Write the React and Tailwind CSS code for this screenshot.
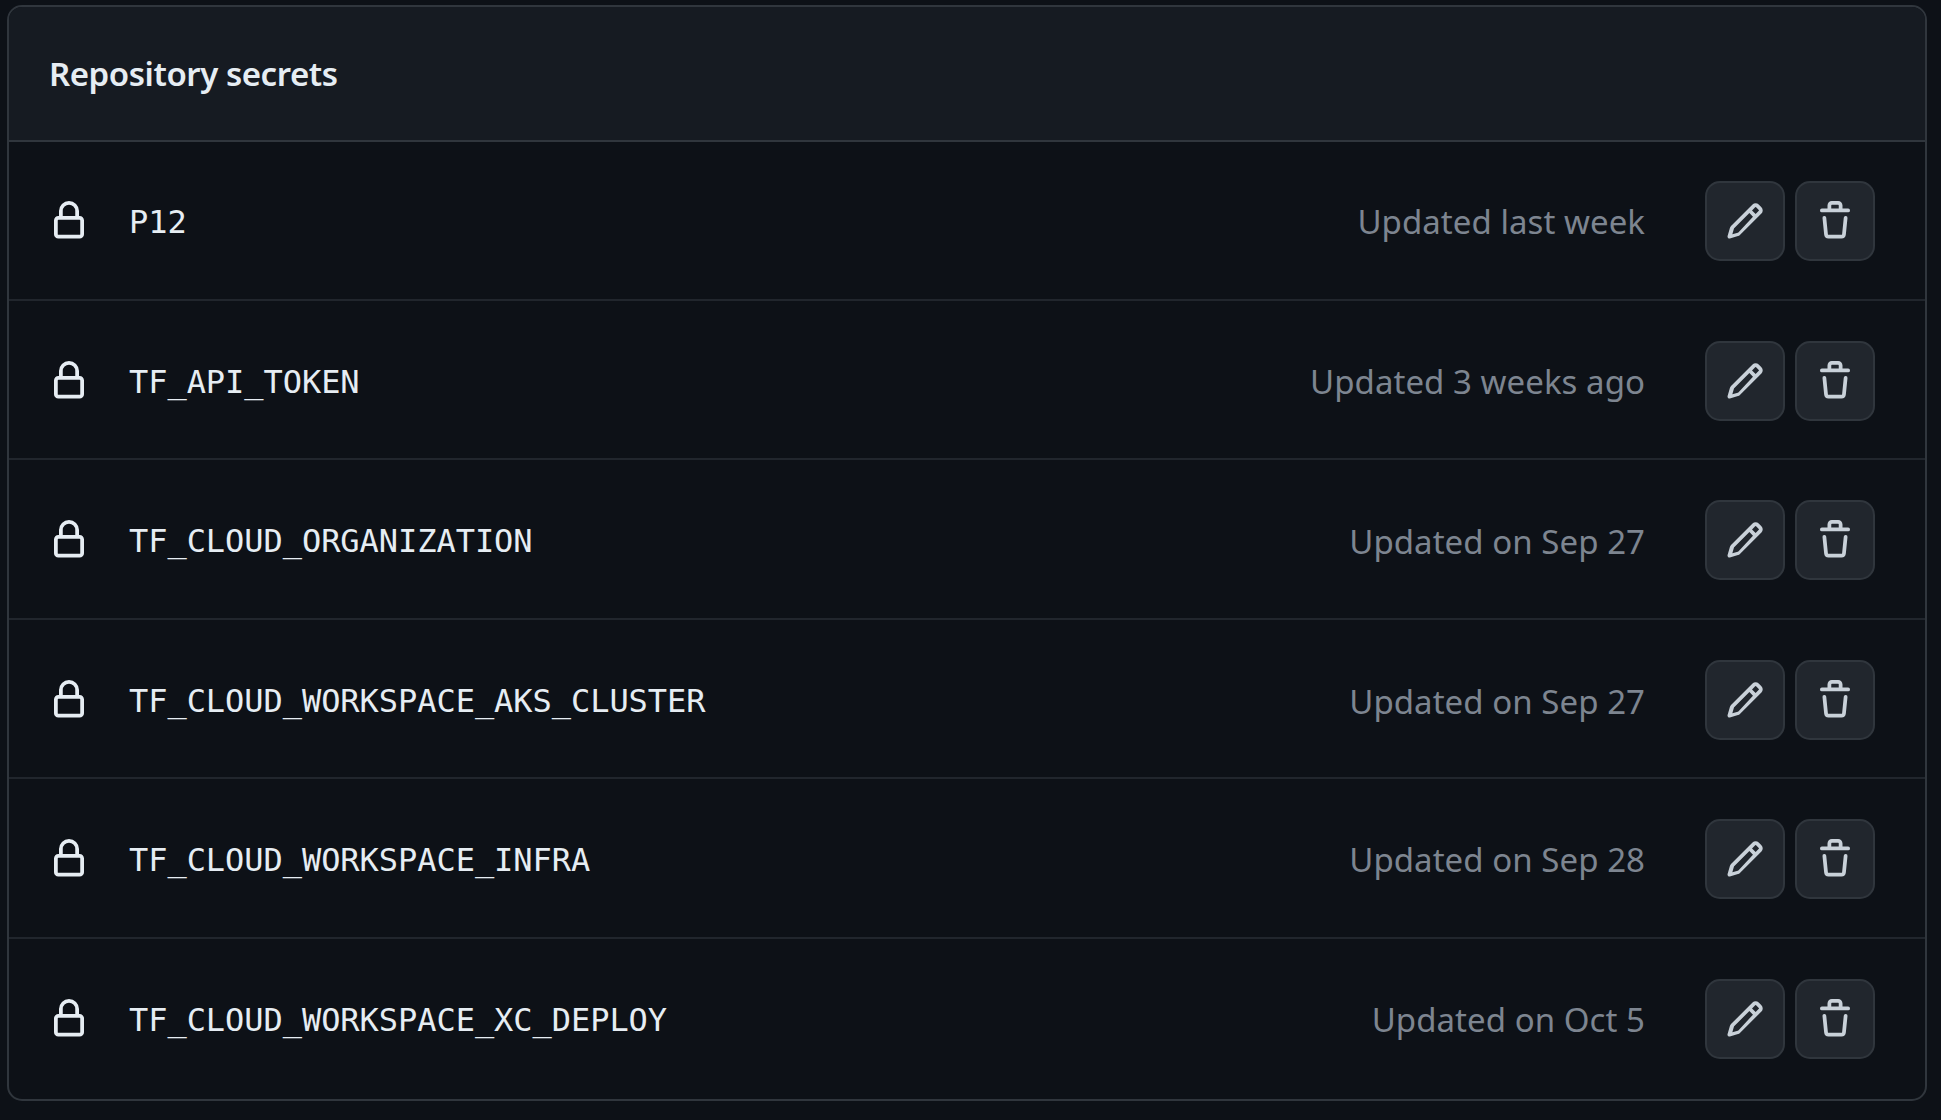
const secrets = [
  ["P12", "Updated last week"],
  ["TF_API_TOKEN", "Updated 3 weeks ago"],
  ["TF_CLOUD_ORGANIZATION", "Updated on Sep 27"],
  ["TF_CLOUD_WORKSPACE_AKS_CLUSTER", "Updated on Sep 27"],
  ["TF_CLOUD_WORKSPACE_INFRA", "Updated on Sep 28"],
  ["TF_CLOUD_WORKSPACE_XC_DEPLOY", "Updated on Oct 5"],
];

function Octicon({ d, className }) {
  return (
    <svg viewBox="0 0 16 16" fill="currentColor" className={className}>
      <path d={d} />
    </svg>
  );
}

const LOCK = "M4 4a4 4 0 0 1 8 0v2h.25c.966 0 1.75.784 1.75 1.75v5.5A1.75 1.75 0 0 1 12.25 15h-8.5A1.75 1.75 0 0 1 2 13.25v-5.5C2 6.784 2.784 6 3.75 6H4Zm8.25 3.5h-8.5a.25.25 0 0 0-.25.25v5.5c0 .138.112.25.25.25h8.5a.25.25 0 0 0 .25-.25v-5.5a.25.25 0 0 0-.25-.25ZM10.5 6V4a2.5 2.5 0 1 0-5 0v2Z";
const PENCIL = "M11.013 1.427a1.75 1.75 0 0 1 2.474 0l1.086 1.086a1.75 1.75 0 0 1 0 2.474l-8.61 8.61c-.21.21-.47.364-.756.445l-3.251.93a.75.75 0 0 1-.927-.928l.929-3.25c.081-.286.235-.547.445-.758l8.61-8.61Zm.176 4.823L9.75 4.81l-6 6a.749.749 0 0 0-.19.324l-.62 2.17 2.17-.62a.749.749 0 0 0 .324-.19Zm1.238-3.763a.25.25 0 0 0-.354 0L10.811 3.75l1.439 1.44 1.263-1.263a.25.25 0 0 0 0-.354Z";
const TRASH = "M11 1.75V3h2.25a.75.75 0 0 1 0 1.5H2.75a.75.75 0 0 1 0-1.5H5V1.75C5 .784 5.784 0 6.75 0h2.5C10.216 0 11 .784 11 1.75ZM4.496 6.675l.66 6.6a.25.25 0 0 0 .249.225h5.19a.25.25 0 0 0 .249-.225l.66-6.6a.75.75 0 0 1 1.492.149l-.66 6.6A1.748 1.748 0 0 1 10.595 15h-5.19a1.75 1.75 0 0 1-1.741-1.575l-.66-6.6a.75.75 0 1 1 1.492-.15ZM6.5 1.75V3h3V1.75a.25.25 0 0 0-.25-.25h-2.5a.25.25 0 0 0-.25.25Z";

function IconButton({ d }) {
  return (
    <button className="flex h-[80px] w-[80px] items-center justify-center rounded-[15px] border-2 border-[#30363d] bg-[#21262d] text-[#c9d1d9]">
      <Octicon d={d} className="h-[40px] w-[40px]" />
    </button>
  );
}

const rowClass = [
  "h-[158.6px] border-b-2 border-[#21262d] pt-[1px]",
  "h-[159.6px] border-b-2 border-[#21262d] pt-[3px]",
  "h-[159.6px] border-b-2 border-[#21262d] pt-[3px]",
  "h-[159.6px] border-b-2 border-[#21262d] pt-[3px]",
  "h-[159.6px] border-b-2 border-[#21262d] pt-[1px]",
  "h-[159.6px]",
];

export default function App() {
  return (
    <div className="min-h-[1120px] bg-[#0d1117] pl-[7px] pr-[14px] pt-[5px] font-['Noto_Sans',sans-serif]">
      <div className="overflow-hidden rounded-[15px] border-2 border-[#30363d]">
        <div className="flex h-[135px] items-center border-b-2 border-[#30363d] bg-[#161b22] pl-[40px]">
          <h3 className="text-[33px] font-semibold leading-none tracking-[-0.45px] text-[#e6edf3]">Repository secrets</h3>
        </div>
        {secrets.map(([name, updated], i) => (
          <div key={name} className={`flex items-center pl-[40px] pr-[50px] ${rowClass[i]}`}>
            <Octicon d={LOCK} className="h-[40px] w-[40px] shrink-0 text-[#e6edf3]" />
            <span className="ml-[40px] flex-1 pt-[2px] font-['DejaVu_Sans_Mono',monospace] text-[32px] leading-none tracking-[-0.05px] text-[#e6edf3]">
              {name}
            </span>
            <span className="pt-[2px] text-[33px] leading-none tracking-[0.05px] text-[#7d8590]">{updated}</span>
            <div className="ml-[60px] flex gap-[10px]">
              <IconButton d={PENCIL} />
              <IconButton d={TRASH} />
            </div>
          </div>
        ))}
      </div>
    </div>
  );
}
